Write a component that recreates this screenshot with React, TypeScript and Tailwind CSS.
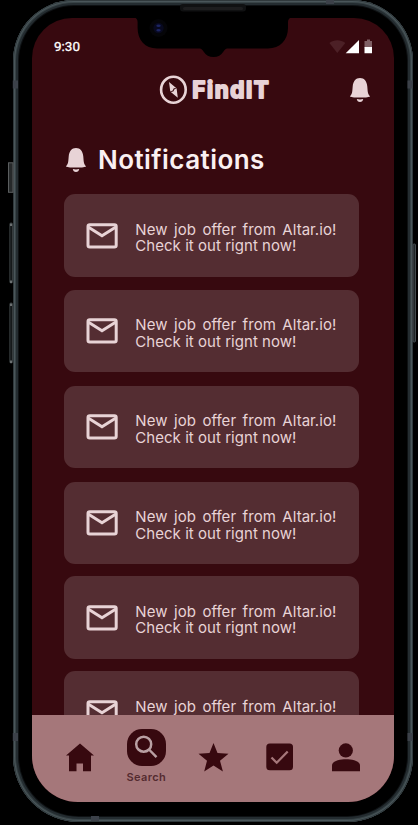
import React from "react";

const cards = ["h-[83px]", "h-[82px] mt-[13px]", "h-[82px] mt-[14px]", "h-[82px] mt-[14px]", "h-[83px] mt-[12px]", "h-[83px] mt-[12px]"];

function Bell() {
  return (
    <svg className="block h-[24px] w-[22px] shrink-0" viewBox="0 0 22 24" fill="#e8d3d6">
      <path d="M.8 18.400C3.500 16.500 3.300 12.500 3.700 8.500C4.200 3.200 6.600 0 11 0S17.800 3.200 18.300 8.500C18.700 12.500 18.500 16.500 21.200 18.400C17.500 20 4.500 20 .8 18.400Z" />
      <path d="M7.800 21C9.800 21.600 12.200 21.600 14.200 21C14 23 12.800 23.900 11 23.900S8 23 7.800 21Z" />
    </svg>
  );
}

function Mail() {
  return (
    <svg className="block h-[26px] w-[32px] shrink-0" viewBox="0 0 32 26" fill="none" stroke="#e8d3d6" strokeWidth="3">
      <rect x="2" y="1.800" width="28.200" height="22.300" rx="1.800" />
      <path d="M2.500 4.200L16 12.800L29.500 4.200" />
    </svg>
  );
}

function Logo() {
  return (
    <svg className="block h-[32px] w-[112px]" viewBox="159 74 112 32" fill="#e8d3d6">
      <ellipse cx="173.400" cy="89.700" rx="12.300" ry="13" fill="none" stroke="#e8d3d6" strokeWidth="2.600" />
      <path d="M169 82L176.200 88L173.800 88.200L172.700 90.500L170.300 91.500Z" />
      <path d="M177.800 97.800L170.800 92L173.300 91.600L174.500 89.300L176.600 88.300Z" />
      <text x="192.300" y="98" fontFamily="Inter, sans-serif" fontWeight="700" fontSize="22.500" textLength="76.500" lengthAdjust="spacing" stroke="#e8d3d6" strokeWidth="1.900" strokeLinejoin="round">FindIT</text>
    </svg>
  );
}

function StatusIcons() {
  return (
    <svg className="block h-[15px] w-[44px]" viewBox="329 39 44 15">
      <path d="M329.400 43C334 39.200 340.700 39.200 345.300 43L337.300 53Z" fill="#4c2026" />
      <path d="M345.700 53.300L359 40V53.300Z" fill="#fff" />
      <path d="M364.500 41H367V39.500H370V41H372V47.500H364.500Z" fill="#806065" />
      <path d="M364.500 47H372V53.300H364.500Z" fill="#fff" />
    </svg>
  );
}

function Hardware() {
  return (
    <svg className="pointer-events-none absolute left-0 top-0 h-[825px] w-[418px]" viewBox="0 0 418 825" fill="none">
      <path d="M132 17H134C136.300 18 137.600 19.500 137.600 22V28C137.600 40 145 48.500 157 48.500H200C202 49 202.500 50 203.500 51.500C206 55.300 209 57 213.500 57S221 55.300 223.500 51.500C224.500 50 225 49 227 48.500H268C280 48.500 288 40 288 28V22C288 19.500 289.300 18 292 17Z" fill="#000" />
      <rect x="180" y="4" width="66" height="7.500" rx="3" fill="#101112" />
      <rect x="183" y="7" width="60" height="3" rx="1.500" fill="#1d1d1e" />
      <circle cx="158.500" cy="28" r="9" fill="#050508" />
      <circle cx="158.500" cy="28" r="5.200" fill="#08091f" />
      <ellipse cx="158.500" cy="25.800" rx="2.200" ry="1.300" fill="#1c2463" />
      <ellipse cx="158.500" cy="30.300" rx="2.200" ry="1.300" fill="#1c2463" />
      <rect x="8.500" y="162.800" width="4.500" height="29.500" fill="#26292a" stroke="#5b5e5f" />
      <rect x="9.800" y="223" width="2.700" height="60" rx="1" fill="#15191a" stroke="#363b3d" />
      <rect x="9.800" y="303" width="2.700" height="60" rx="1" fill="#15191a" stroke="#363b3d" />
      <path d="M11 223.500V226M11 280.500V283M11 303.500V306M11 360.500V363M414.500 246V250M414.500 336V340" stroke="#6b7071" strokeWidth="2" />
      <rect x="413" y="244" width="2.500" height="98" rx="1" fill="#202628" stroke="#444b4e" />
      <path d="M12.800 84.500H18M407.500 84.500H412.800M12.800 737H18M407.500 737H412.800" stroke="#3c4149" strokeWidth="8" />
      <path d="M326 0H334V4H326ZM91 816H99V821H91Z" fill="#3c4149" />
    </svg>
  );
}

export default function App() {
  return (
    <div className="relative h-[825px] w-[418px] overflow-hidden bg-black pl-[13px] font-['Inter',sans-serif]">
      <div className="h-[822px] w-[400px] rounded-t-[61px] rounded-b-[66px] bg-black px-[19px] pt-[18px] shadow-[inset_0_0_0_1px_#30393c,inset_0_0_0_2px_#4a565a,inset_0_0_0_3px_#384346,inset_0_0_0_5px_#242c30,inset_0_0_0_6px_#0e1113]">
        <div className="flex h-[784px] w-[362px] flex-col overflow-hidden rounded-t-[40px] rounded-b-[46px] bg-[#37090f]">
          <div className="flex h-[54px] shrink-0 items-center justify-between pl-[22px] pr-[21px] pt-[2px]">
            <span className="font-['Roboto',sans-serif] text-[13.500px] font-normal leading-[16px] text-white [-webkit-text-stroke:0.300px_white]">9:30</span>
            <StatusIcons />
          </div>
          <div className="flex h-[36px] shrink-0 items-center justify-between pl-[127px] pr-[23px]">
            <Logo />
            <Bell />
          </div>
          <div className="flex h-[86px] shrink-0 items-center gap-[11px] pl-[33px] pt-[18px]">
            <Bell />
            <h1 className="text-[26px] font-semibold leading-[32px] tracking-[0.450px] text-[#faf0f1]">Notifications</h1>
          </div>
          <main className="flex min-h-0 flex-1 flex-col overflow-hidden px-8">
            {cards.map((size, i) => (
              <article key={i} className={"flex w-[295px] shrink-0 items-center rounded-[11px] bg-[#542d32] pl-[22px] " + size}>
                <Mail />
                <p className="ml-[17.300px] mt-[5.500px] w-[201px] text-justify text-[15px] leading-[16.500px] tracking-[0.040px] text-[#e8d3d6]">
                  New job offer from Altar.io! Check it out rignt now!
                </p>
              </article>
            ))}
          </main>
          <nav className="flex h-[87.500px] shrink-0 items-start bg-[#a5777a] pl-[33px] text-[#37090f]">
            <svg className="mt-[28px] h-[29px] w-[30px]" viewBox="0 0 30 29" fill="currentColor">
              <path d="M15 .5L29 12.500H26V28.300H18V20.500H11.500V28.300H4V12.500H1Z" />
            </svg>
            <div className="ml-[27.400px] mt-[14px] flex w-[48px] flex-col items-center">
              <div className="flex h-[37.500px] w-[39px] items-center justify-center rounded-[15px] bg-[#37090f]">
                <svg className="h-[24px] w-[24px]" viewBox="0 0 24 24" fill="none" stroke="#b9a0a3" strokeWidth="2.500">
                  <circle cx="9.700" cy="9.200" r="7.500" />
                  <path d="M15 14.500L22.500 22.200" />
                </svg>
              </div>
              <span className="mt-[4px] text-[11px] font-semibold leading-[14px] tracking-[0.400px] text-[#542b30]">Search</span>
            </div>
            <svg className="ml-[26.600px] mt-[27px] h-[32px] w-[34px]" viewBox="197 742 34 32" fill="currentColor">
              <path d="M213.500 743L217.500 753L228.500 753.700L220 760.700L222.900 771.500L213.500 765.600L204.200 771.500L207 760.700L198.500 753.700L209.500 753Z" />
            </svg>
            <svg className="ml-[34px] mt-[28px] h-[29px] w-[29px]" viewBox="265 743 29 29" fill="currentColor">
              <rect x="266.300" y="743.600" width="26.700" height="26.700" rx="3.500" />
              <path d="M271.500 757.500L276.700 762.700L287.700 751.500" fill="none" stroke="#a5777a" strokeWidth="2.300" />
            </svg>
            <svg className="ml-[37px] mt-[28px] h-[29px] w-[30px]" viewBox="331 743 30 29" fill="currentColor">
              <circle cx="345.800" cy="750.400" r="7.100" />
              <path d="M332 771.300V765.500C332 761 340 759.300 346 759.300S360 761 360 765.500V771.300Z" />
            </svg>
          </nav>
        </div>
      </div>
      <Hardware />
    </div>
  );
}
